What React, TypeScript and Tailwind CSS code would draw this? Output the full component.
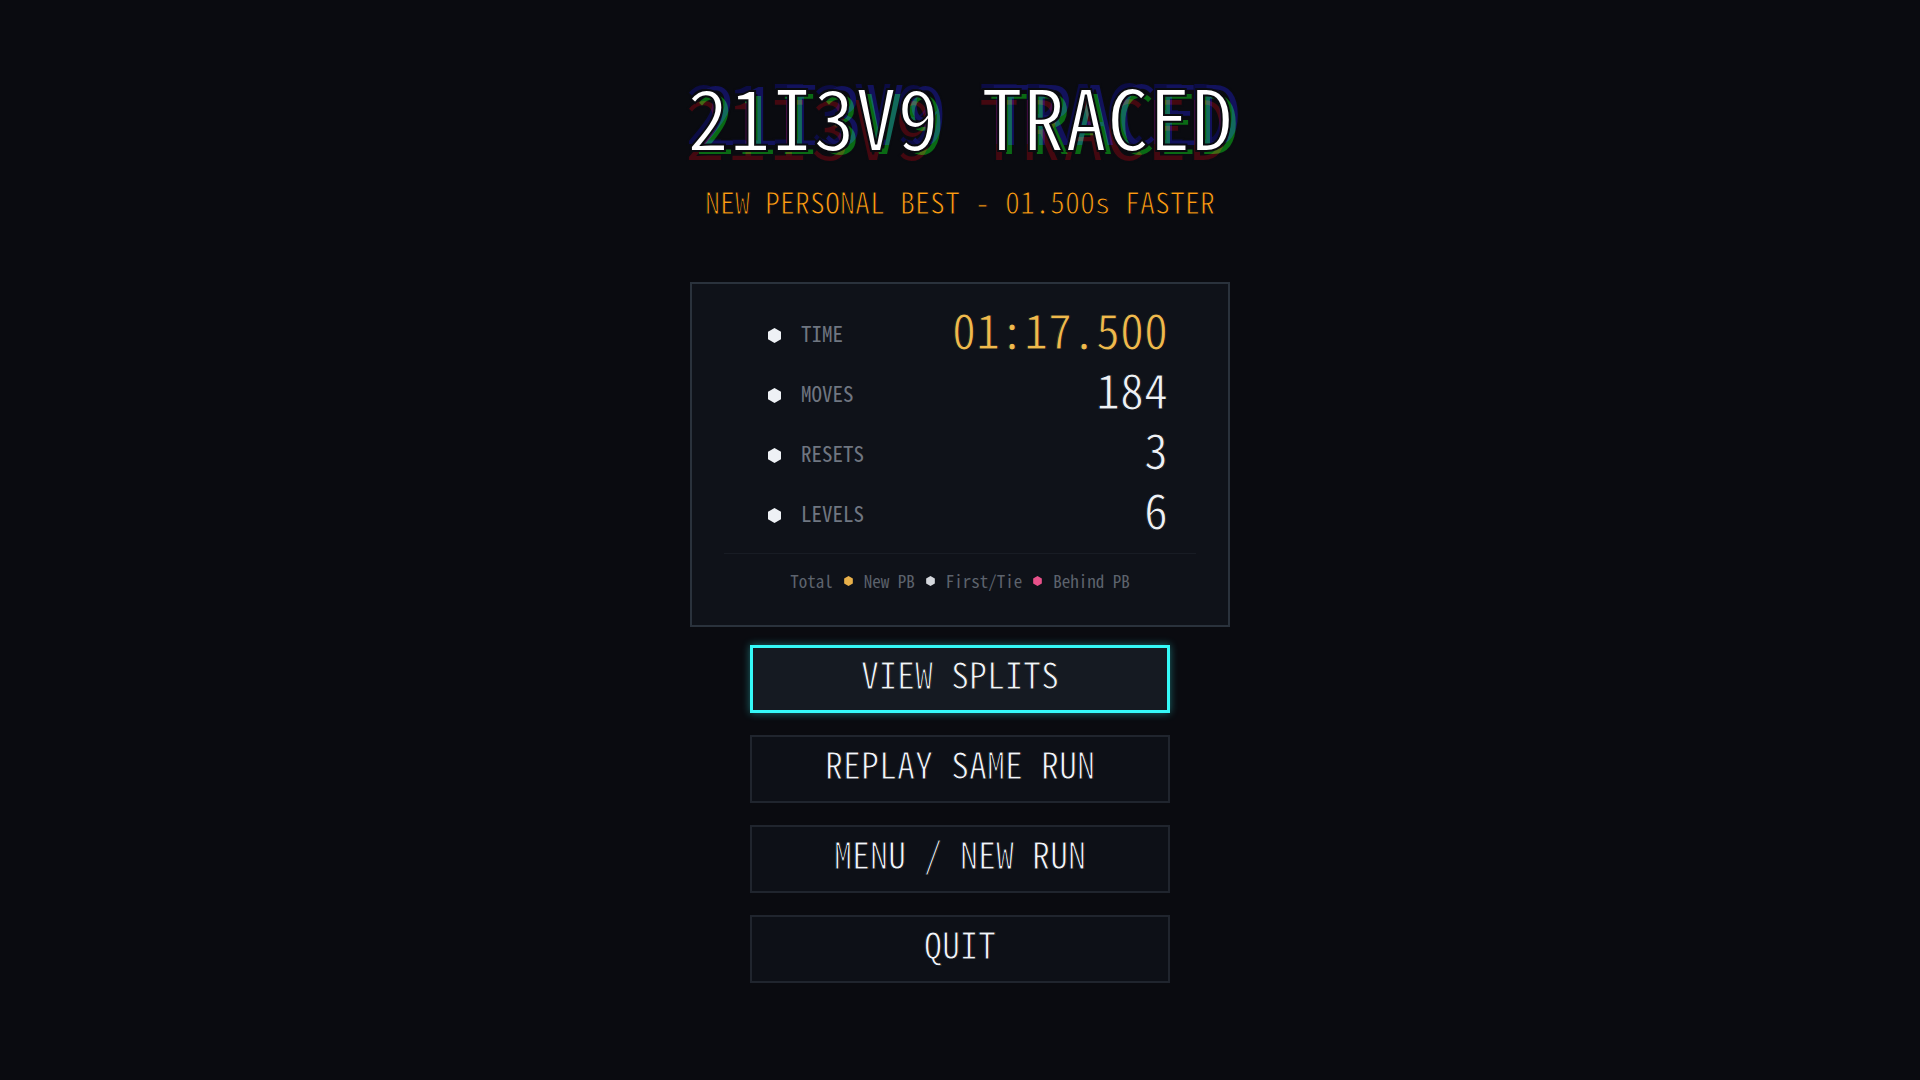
import { clsx } from 'clsx'

const title = '21I3V9 TRACED'

// Offset colour copies behind the title
const ghosts = [
  'text-[#0c0c44] -translate-x-[3px] -translate-y-[6px]',
  'text-[#12125c] translate-x-[9px] -translate-y-[5px]',
  'text-[#440810] -translate-x-[3px] translate-y-[10px]',
  'text-[#0a6a14] translate-x-[7px] translate-y-1'
]

const stats = [
  { label: 'TIME', value: '01:17.500', highlight: true },
  { label: 'MOVES', value: '184' },
  { label: 'RESETS', value: '3' },
  { label: 'LEVELS', value: '6' }
]

const legend = [
  { label: 'New PB', color: 'text-[#e8b04a]' },
  { label: 'First/Tie', color: 'text-[#d5d8dd]' },
  { label: 'Behind PB', color: 'text-[#e8518a]' }
]

const actions = ['VIEW SPLITS', 'REPLAY SAME RUN', 'MENU / NEW RUN', 'QUIT']

function Hexagon({ className }: { className?: string }) {
  return (
    <svg viewBox="0 0 26 30" className={className} fill="currentColor" aria-hidden="true">
      <path d="M13 0 26 7.5v15L13 30 0 22.5v-15z" />
    </svg>
  )
}

export default function App() {
  return (
    <main className="min-h-screen bg-[#0a0b10] flex flex-col items-center pt-[67px] pb-12 font-['Noto_Sans_Mono_CJK_JP','Noto_Sans_Mono_CJK_SC','DejaVu_Sans_Mono',monospace]">
      {/* Result heading */}
      <h1 className="relative isolate text-[84px] leading-[96px] font-normal text-white whitespace-nowrap [-webkit-text-stroke:2px_#0a0b10]">
        {ghosts.map((ghost) => (
          <span
            key={ghost}
            aria-hidden="true"
            data-text={title}
            className={clsx('absolute inset-0 -z-10 mix-blend-lighten before:content-[attr(data-text)]', ghost)}
          />
        ))}
        {title}
      </h1>
      <p className="mt-5 text-[30px] leading-9 text-[#ff9c12] whitespace-nowrap [-webkit-text-stroke:1px_#0a0b10]">
        NEW PERSONAL BEST - 01.500s FASTER
      </p>

      {/* Run stats */}
      <section className="mt-[63px] w-full max-w-[540px] bg-[#0f1219] border-2 border-[#2a323c] px-8 pt-[21px] pb-8">
        <dl className="pl-11 pr-7">
          {stats.map((stat) => (
            <div key={stat.label} className="flex items-center h-[60px]">
              <Hexagon className="w-[13px] h-[15px] text-[#eef1f5]" />
              <dt className="ml-5 pb-1 text-[21px] leading-[56px] text-[#6f7681]">{stat.label}</dt>
              <dd
                className={clsx(
                  'ml-auto pb-[14px] text-[48px] leading-[46px] [-webkit-text-stroke:1px_#0f1219]',
                  stat.highlight ? 'text-[#f0b94c]' : 'text-[#eef1f5]'
                )}
              >
                {stat.value}
              </dd>
            </div>
          ))}
        </dl>
        <div className="mt-2 border-t border-[#181c24] pt-[15px] flex items-center justify-center text-[17px] leading-6 text-[#5d636d]">
          <span>Total</span>
          {legend.map((item) => (
            <span key={item.label} className="flex items-center">
              <Hexagon className={clsx('w-[9px] h-[10px] mx-[11px]', item.color)} />
              {item.label}
            </span>
          ))}
        </div>
      </section>

      {/* Actions */}
      <nav className="mt-[18px] w-full max-w-[420px] flex flex-col gap-[22px]">
        {actions.map((action, index) => (
          <button
            key={action}
            className={clsx(
              'h-[68px] text-[36px] leading-none text-[#f2f5fa] pb-3',
              index === 0
                ? 'bg-[#151a22] border-[3px] border-[#35f8f8] shadow-[0_0_8px_#35f8f866] [-webkit-text-stroke:1px_#151a22]'
                : 'bg-[#0d1017] border-2 border-[#20252e] [-webkit-text-stroke:1px_#0d1017]'
            )}
          >
            {action}
          </button>
        ))}
      </nav>
    </main>
  )
}
